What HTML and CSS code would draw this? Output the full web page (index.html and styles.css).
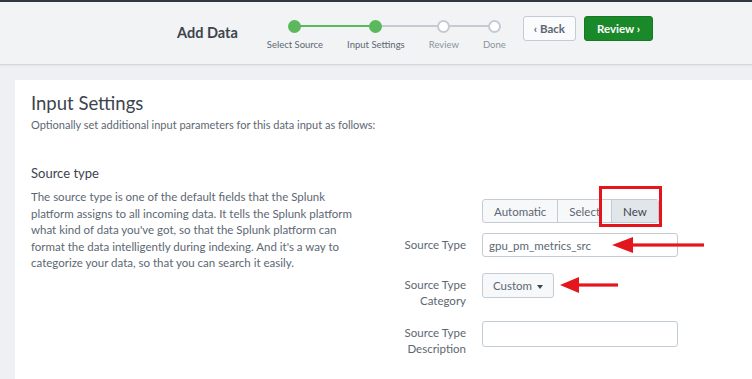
FILE: index.html
```html
<!DOCTYPE html>
<html lang="en">
<head>
  <meta charset="UTF-8" />
  <title>Add Data - Input Settings</title>
  <link rel="stylesheet" href="styles.css">
</head>
<body>

<header class="topbar">
  <div class="title">Add Data</div>
  <div class="steps">
    <div class="step done">
      <span class="dot"></span>
      <span class="step-label">Select Source</span>
    </div>
    <div class="step done current">
      <span class="dot"></span>
      <span class="step-label">Input Settings</span>
    </div>
    <div class="step">
      <span class="dot"></span>
      <span class="step-label">Review</span>
    </div>
    <div class="step">
      <span class="dot"></span>
      <span class="step-label">Done</span>
    </div>
  </div>
  <div class="nav-buttons">
    <button class="btn btn-back">&lsaquo; Back</button>
    <button class="btn btn-primary">Review &rsaquo;</button>
  </div>
</header>

<div class="page">
  <div class="panel">
    <h2 class="panel-title">Input Settings</h2>
    <p class="panel-sub">Optionally set additional input parameters for this data input as follows:</p>

    <div class="section">
      <div class="section-text">
        <h3 class="section-title">Source type</h3>
        <p class="section-desc">The source type is one of the default fields that the Splunk platform assigns to all incoming data. It tells the Splunk platform what kind of data you've got, so that the Splunk platform can format the data intelligently during indexing. And it's a way to categorize your data, so that you can search it easily.</p>
      </div>

      <div class="form">
        <div class="row">
          <div class="label"></div>
          <div class="control">
            <div class="btn-group">
              <button class="seg">Automatic</button>
              <button class="seg">Select</button>
              <button class="seg active">New</button>
              <span class="mark-box"></span>
            </div>
          </div>
        </div>

        <div class="row">
          <label class="label">Source Type</label>
          <div class="control">
            <input class="text-input" type="text" value="gpu_pm_metrics_src">
            <svg class="arrow arrow-1" width="92" height="20" viewBox="0 0 92 20">
              <polygon points="0,10 21,2 21,18" fill="#e4161d"/>
              <rect x="19" y="8.4" width="73" height="3.2" fill="#e4161d"/>
            </svg>
          </div>
        </div>

        <div class="row row-cat">
          <label class="label">Source Type Category</label>
          <div class="control">
            <button class="dropdown">Custom <span class="caret"></span></button>
            <svg class="arrow arrow-2" width="58" height="20" viewBox="0 0 58 20">
              <polygon points="0,10 19,2 19,18" fill="#e4161d"/>
              <rect x="17" y="8.4" width="41" height="3.2" fill="#e4161d"/>
            </svg>
          </div>
        </div>

        <div class="row row-desc">
          <label class="label">Source Type Description</label>
          <div class="control">
            <input class="text-input tall" type="text" value="">
          </div>
        </div>
      </div>
    </div>
  </div>
</div>

</body>
</html>
```

FILE: styles.css
```css
body {
  margin: 0;
  font-family: Lato, "Open Sans", sans-serif;
  color: #3c444d;
  background: #eef0f3;
  height: 379px;
  overflow: hidden;
}

/* header bar */
.topbar {
  display: flex;
  align-items: flex-start;
  height: 62px;
  padding-left: 177px;
  background: #f2f3f5;
  border-top: 2px solid #31373e;
  border-bottom: 1px solid #d3d7dc;
  box-shadow: 0 1px 2px #e1e4e8;
}
.title {
  margin-top: 22px;
  font-size: 14.5px;
  font-weight: 700;
  color: #3c444d;
}
.steps {
  display: flex;
  gap: 24px;
  margin-left: 29px;
  margin-top: 18px;
}
.step {
  position: relative;
  display: flex;
  flex-direction: column;
  align-items: center;
}
.dot {
  position: relative;
  z-index: 1;
  width: 9px;
  height: 9px;
  border-radius: 50%;
  border: 2px solid #c3cbd4;
  background: #fff;
}
.step.done .dot {
  border-color: #5cb85c;
  background: #5cb85c;
}
/* connector halves */
.step::before,
.step::after {
  content: "";
  position: absolute;
  top: 5px;
  height: 2px;
  background: #c3cbd4;
}
.step::before {
  left: -12px;
  right: 50%;
}
.step::after {
  left: 50%;
  right: -12px;
}
.step:first-child::before,
.step:last-child::after {
  display: none;
}
.step.done::before,
.step.done:first-child::after {
  background: #5cb85c;
}
.step-label {
  margin-top: 6px;
  font-size: 9.5px;
  color: #5c6773;
  white-space: nowrap;
}
.step:not(.done) .step-label {
  color: #8a949e;
}

.nav-buttons {
  display: flex;
  gap: 8px;
  margin-left: 17px;
  margin-top: 14px;
}
.btn {
  height: 25px;
  padding: 0 10px;
  border-radius: 3px;
  font-family: inherit;
  font-size: 11.5px;
  font-weight: 700;
}
.btn-back {
  background: #fafbfc;
  border: 1px solid #c3cbd4;
  color: #5c6773;
}
.btn-primary {
  padding: 0 12px;
  background: #1a8929;
  border: 1px solid #167a24;
  color: #fff;
}

/* content */
.page {
  padding: 15px 0 0 15px;
}
.panel {
  background: #fff;
  height: 287px;
  padding: 12px 16px 0;
}
.panel-title {
  margin: 0;
  font-size: 18.5px;
  font-weight: 400;
  color: #3c444d;
}
.panel-sub {
  margin: 4px 0 0;
  font-size: 11px;
  color: #5c6773;
}

.section {
  display: flex;
  margin-top: 34px;
}
.section-text {
  width: 345px;
}
.section-title {
  margin: 0;
  font-size: 13px;
  font-weight: 400;
  color: #3c444d;
}
.section-desc {
  width: 325px;
  margin: 8px 0 0;
  font-size: 11.5px;
  line-height: 16.5px;
  color: #5c6773;
}

.form {
  display: flex;
  flex-direction: column;
  gap: 10px;
  padding-top: 34px;
}
.row {
  display: flex;
  gap: 16px;
}
.row-cat {
  margin-top: 6px;
}
.row-desc {
  margin-top: 2px;
}
.label {
  width: 90px;
  font-size: 11.5px;
  line-height: 16px;
  text-align: right;
  color: #5c6773;
  padding-top: 4px;
}
.control {
  position: relative;
  display: flex;
  align-items: flex-start;
}

.btn-group {
  position: relative;
  display: flex;
  border: 1px solid #c3cbd4;
  border-radius: 3px;
  background: #f7f8fa;
}
.seg {
  height: 22px;
  padding: 0 11px;
  border: 0;
  border-left: 1px solid #c3cbd4;
  background: transparent;
  font-family: inherit;
  font-size: 11.5px;
  color: #5c6773;
}
.seg:first-child {
  border-left: 0;
}
.seg.active {
  background: #e1e6eb;
  color: #3c444d;
}

.text-input {
  width: 182px;
  height: 22px;
  padding: 0 6px;
  border: 1px solid #c3cbd4;
  border-radius: 3px;
  font-family: inherit;
  font-size: 11.5px;
  color: #5c6773;
}
.text-input.tall {
  height: 24px;
}
.dropdown {
  height: 25px;
  padding: 0 10px;
  border: 1px solid #c3cbd4;
  border-radius: 3px;
  background: #f7f8fa;
  font-family: inherit;
  font-size: 11.5px;
  color: #5c6773;
}
.caret {
  display: inline-block;
  margin-left: 2px;
  vertical-align: middle;
  border-left: 3px solid transparent;
  border-right: 3px solid transparent;
  border-top: 4px solid #3c444d;
}

/* red annotation marks */
.mark-box {
  position: absolute;
  left: 116px;
  top: -14px;
  width: 57px;
  height: 35px;
  border: 3px solid #e4161d;
}
.arrow {
  position: absolute;
  top: 2px;
}
.arrow-1 {
  left: 130px;
}
.arrow-2 {
  left: 78px;
}
```
